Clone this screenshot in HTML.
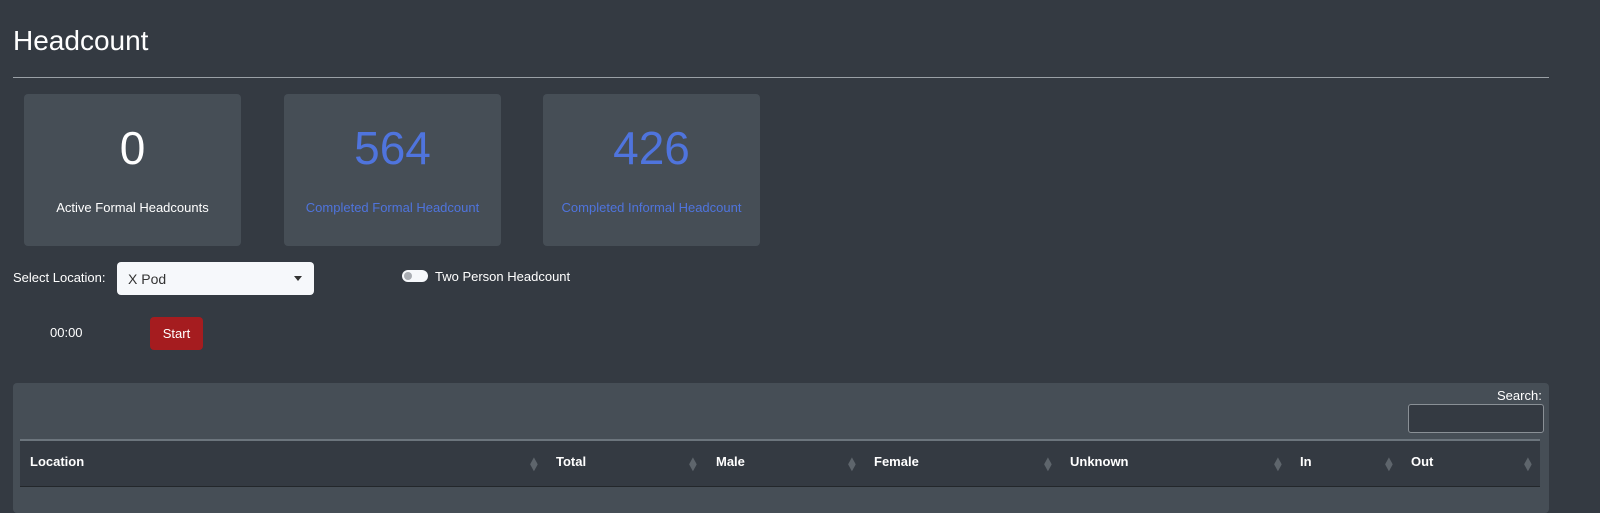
<!DOCTYPE html>
<html><head><style>
*{box-sizing:border-box;margin:0;padding:0}
body{width:1600px;height:501px;overflow:hidden;background:#343a42;font-family:"Liberation Sans",sans-serif;color:#fff;position:relative}
.a{position:absolute}
h1{position:absolute;left:13px;top:25px;font-size:28px;font-weight:400}
.hr{left:13px;top:77px;width:1536px;height:1px;background:#9aa0a6}
.card{background:#464e56;border-radius:4px;top:94px;height:152px;width:217px;text-align:center}
.card .n{position:absolute;top:27px;width:100%;font-size:46px;font-weight:300}
.card .l{position:absolute;top:106px;width:100%;font-size:13px}
.blue{color:#4f74dd}
.sel{left:117px;top:262px;width:197px;height:33px;background:#f6f8fb;border-radius:4px;color:#333;font-size:14px;padding:9px 0 0 11px}
.sel:after{content:"";position:absolute;right:12px;top:14px;border:4px solid transparent;border-top:5px solid #333}
.tbl{left:13px;top:383px;width:1536px;height:130px;background:#464e56;border-radius:4px}
.th{left:20px;top:439px;width:1520px;height:48px;background:#343a42;border-top:2px solid #6c757d;border-bottom:1px solid #23272b}
.th span{position:absolute;top:13px;font-size:13px;font-weight:bold}
.th i{position:absolute;top:13px;color:#5e656c;font-style:normal;font-size:18px;line-height:18px;transform:scaleX(.55)}
</style></head><body>
<h1>Headcount</h1>
<div class="a hr"></div>
<div class="a card" style="left:24px"><div class="n">0</div><div class="l">Active Formal Headcounts</div></div>
<div class="a card blue" style="left:284px"><div class="n">564</div><div class="l">Completed Formal Headcount</div></div>
<div class="a card blue" style="left:543px;width:217px"><div class="n">426</div><div class="l">Completed Informal Headcount</div></div>
<div class="a" style="left:13px;top:270px;font-size:13px">Select Location:</div>
<div class="a sel">X Pod</div>
<div class="a" style="left:402px;top:270px;width:26px;height:12px;border-radius:6px;background:#f6f8fb"><div style="position:absolute;left:2px;top:2px;width:8px;height:8px;border-radius:50%;background:#a9adb3"></div></div>
<div class="a" style="left:435px;top:269px;font-size:13px">Two Person Headcount</div>
<div class="a" style="left:50px;top:325px;font-size:13px">00:00</div>
<div class="a" style="left:150px;top:317px;width:53px;height:33px;background:#a51c1f;border-radius:4px;font-size:13px;text-align:center;padding-top:9px">Start</div>
<div class="a tbl"></div>
<div class="a" style="left:1497px;top:388px;font-size:13px">Search:</div>
<div class="a" style="left:1408px;top:404px;width:136px;height:29px;background:#343a42;border:1px solid #8a9096;border-radius:3px"></div>
<div class="a th">
<span style="left:10px">Location</span><i style="left:507px">◆</i>
<span style="left:536px">Total</span><i style="left:666px">◆</i>
<span style="left:696px">Male</span><i style="left:825px">◆</i>
<span style="left:854px">Female</span><i style="left:1021px">◆</i>
<span style="left:1050px">Unknown</span><i style="left:1251px">◆</i>
<span style="left:1280px">In</span><i style="left:1362px">◆</i>
<span style="left:1391px">Out</span><i style="left:1501px">◆</i>
</div>
</body></html>
